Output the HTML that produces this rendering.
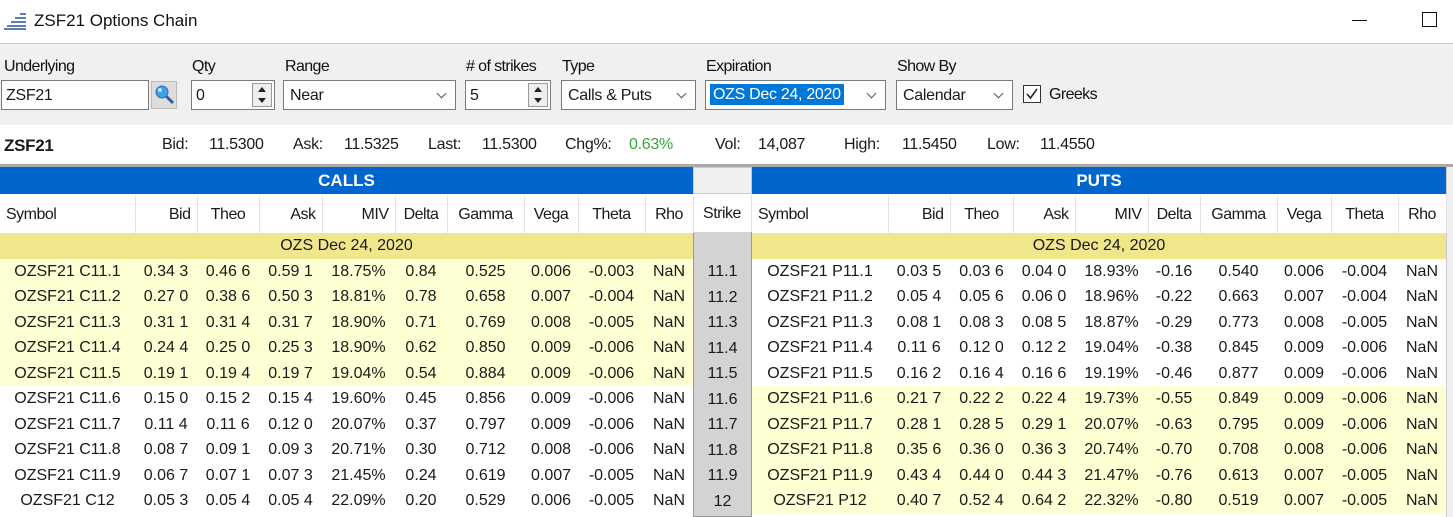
<!DOCTYPE html>
<html><head><meta charset="utf-8">
<style>
*{margin:0;padding:0;box-sizing:border-box}
body{width:1453px;height:517px;overflow:hidden;background:#fff;font-family:"Liberation Sans",sans-serif;font-size:16px;color:#1a1a1a;position:relative}
.a{position:absolute}
.lbl{position:absolute;top:58px;font-size:16px;letter-spacing:-0.6px;color:#111}
.box{position:absolute;top:80px;height:30px;background:#fff;border:1px solid #7a7a7a;font-size:16px;padding:6px 4px 4px;letter-spacing:-0.3px}
.dd::after{content:"";position:absolute;right:10px;top:9px;width:6px;height:6px;border-right:1px solid #555;border-bottom:1px solid #555;transform:rotate(45deg)}
.spin{position:absolute;right:2px;top:2px;width:20px;height:24px;border:1px solid #999;background:#eee}
.spin::before{content:"";position:absolute;left:5px;top:3px;border-left:4px solid transparent;border-right:4px solid transparent;border-bottom:5px solid #222}
.spin::after{content:"";position:absolute;left:5px;top:14px;border-left:4px solid transparent;border-right:4px solid transparent;border-top:5px solid #222}
.info{position:absolute;top:136px;font-size:16px;letter-spacing:-0.3px}
table{border-collapse:collapse;table-layout:fixed;position:absolute}
td{height:25.5px;padding:1px 4px 0;white-space:nowrap;font-size:16px;text-align:center;overflow:hidden}
th{height:37px;font-weight:normal;font-size:16px;letter-spacing:-0.5px;border-right:1px solid #e3e3e3;padding:1px 6px 0;text-align:right;white-space:nowrap}
th.l{text-align:left}
th.c{text-align:center}
tr.y td{background:#ffffd4}
tr.g td{background:#f0e68c;text-align:center}
</style></head><body>
<svg class="a" style="left:4px;top:12px" width="24" height="18" viewBox="0 0 24 18"><g fill="#5a7fb0"><rect x="16" y="1" width="6" height="2"/><rect x="11" y="5" width="11" height="2"/><rect x="7" y="9" width="15" height="2"/><rect x="3" y="13" width="19" height="2"/><rect x="0" y="16" width="22" height="2"/></g></svg>
<div class="a" style="left:34px;top:11px;font-size:17px;color:#111">ZSF21 Options Chain</div>
<div class="a" style="left:1352px;top:20px;width:15px;height:1px;background:#111"></div>
<div class="a" style="left:1422px;top:12px;width:15px;height:15px;border:1px solid #111"></div>
<div class="a" style="left:0;top:43px;width:1453px;height:82px;background:#f0f0f0;border-top:1px solid #ccc"></div>
<div class="lbl" style="left:4px">Underlying</div>
<div class="box" style="left:1px;width:148px">ZSF21</div>
<div class="a" style="left:151px;top:81px;width:26px;height:28px;background:#ddd;border:1px solid #bbb"></div>
<svg class="a" style="left:154px;top:84px" width="22" height="22" viewBox="0 0 22 22"><line x1="11" y1="11" x2="19" y2="19" stroke="#3a5c99" stroke-width="3"/><circle cx="8" cy="8" r="6" fill="#3fa0e8" stroke="#2a6fb5"/><circle cx="6" cy="6" r="2" fill="#bfe4ff"/></svg>
<div class="lbl" style="left:192px">Qty</div>
<div class="box" style="left:191px;width:84px">0<div class="spin"></div></div>
<div class="lbl" style="left:285px">Range</div>
<div class="box dd" style="left:283px;width:173px;padding-left:6px">Near</div>
<div class="lbl" style="left:466px">#&nbsp;of strikes</div>
<div class="box" style="left:465px;width:86px">5<div class="spin"></div></div>
<div class="lbl" style="left:562px">Type</div>
<div class="box dd" style="left:561px;width:135px;padding-left:6px">Calls &amp; Puts</div>
<div class="lbl" style="left:706px">Expiration</div>
<div class="box dd" style="left:705px;width:181px;padding:3px 4px"><span style="background:#0078d7;color:#fff;padding:2px 3px 1px;display:inline-block">OZS Dec 24, 2020</span></div>
<div class="lbl" style="left:897px">Show By</div>
<div class="box dd" style="left:896px;width:117px;padding-left:6px">Calendar</div>
<div class="a" style="left:1023px;top:85px;width:18px;height:18px;border:1px solid #333;background:#fff"></div>
<svg class="a" style="left:1025px;top:87px" width="14" height="14" viewBox="0 0 14 14"><path d="M2 7 L5.5 11 L12 2" fill="none" stroke="#222" stroke-width="1.6"/></svg>
<div class="lbl" style="left:1049px;top:86px">Greeks</div>
<div class="info" style="left:4px;font-weight:bold;font-size:17px">ZSF21</div>
<div class="info" style="left:162px">Bid:</div><div class="info" style="left:209px">11.5300</div>
<div class="info" style="left:293px">Ask:</div><div class="info" style="left:344px">11.5325</div>
<div class="info" style="left:428px">Last:</div><div class="info" style="left:482px">11.5300</div>
<div class="info" style="left:565px">Chg%:</div><div class="info" style="left:629px;color:#3aa43a">0.63%</div>
<div class="info" style="left:715px">Vol:</div><div class="info" style="left:758px">14,087</div>
<div class="info" style="left:844px">High:</div><div class="info" style="left:902px">11.5450</div>
<div class="info" style="left:987px">Low:</div><div class="info" style="left:1040px">11.4550</div>
<div class="a" style="left:0;top:164px;width:1453px;height:3px;background:#aaa"></div>
<div class="a" style="left:0;top:167px;width:693px;height:27px;background:#0066cc;color:#fff;font-weight:bold;text-align:center;line-height:27px;font-size:17px">CALLS</div>
<div class="a" style="left:693px;top:167px;width:59px;height:27px;background:#f0f0f0;border:1px solid #ccc"></div>
<div class="a" style="left:752px;top:167px;width:694px;height:27px;background:#0066cc;color:#fff;font-weight:bold;text-align:center;line-height:27px;font-size:17px">PUTS</div>
<div class="a" style="left:1446px;top:167px;width:7px;height:350px;background:#f0f0f0;border-left:1px solid #ccc"></div>
<div class="a" style="left:693px;top:195px;width:59px;height:38px;line-height:38px;text-align:center;letter-spacing:-0.5px;border-right:1px solid #e3e3e3">Strike</div>
<div class="a" style="left:693px;top:232px;width:59px;height:285px;background:#d3d3d3;border-left:1px solid #999;border-right:1px solid #999;border-bottom:1px solid #999"></div>
<div class="a" style="left:693px;top:259px;width:59px;text-align:center;line-height:25.5px;font-size:16px">
<div>11.1</div><div>11.2</div><div>11.3</div><div>11.4</div><div>11.5</div><div>11.6</div><div>11.7</div><div>11.8</div><div>11.9</div><div>12</div></div>

<table style="left:0;top:196px;width:693px">
<colgroup><col style="width:135px"><col style="width:62px"><col style="width:62px"><col style="width:63px"><col style="width:73px"><col style="width:52px"><col style="width:77px"><col style="width:54px"><col style="width:67px"><col style="width:48px"></colgroup>
<tr><th class="l">Symbol</th><th>Bid</th><th class="c">Theo</th><th>Ask</th><th>MIV</th><th class="c">Delta</th><th class="c">Gamma</th><th class="c">Vega</th><th class="c">Theta</th><th class="c">Rho</th></tr>
<tr class="g"><td colspan="10">OZS Dec 24, 2020</td></tr>
<tr class="y"><td>OZSF21 C11.1</td><td>0.34 3</td><td>0.46 6</td><td>0.59 1</td><td>18.75%</td><td>0.84</td><td>0.525</td><td>0.006</td><td>-0.003</td><td>NaN</td></tr>
<tr class="y"><td>OZSF21 C11.2</td><td>0.27 0</td><td>0.38 6</td><td>0.50 3</td><td>18.81%</td><td>0.78</td><td>0.658</td><td>0.007</td><td>-0.004</td><td>NaN</td></tr>
<tr class="y"><td>OZSF21 C11.3</td><td>0.31 1</td><td>0.31 4</td><td>0.31 7</td><td>18.90%</td><td>0.71</td><td>0.769</td><td>0.008</td><td>-0.005</td><td>NaN</td></tr>
<tr class="y"><td>OZSF21 C11.4</td><td>0.24 4</td><td>0.25 0</td><td>0.25 3</td><td>18.90%</td><td>0.62</td><td>0.850</td><td>0.009</td><td>-0.006</td><td>NaN</td></tr>
<tr class="y"><td>OZSF21 C11.5</td><td>0.19 1</td><td>0.19 4</td><td>0.19 7</td><td>19.04%</td><td>0.54</td><td>0.884</td><td>0.009</td><td>-0.006</td><td>NaN</td></tr>
<tr><td>OZSF21 C11.6</td><td>0.15 0</td><td>0.15 2</td><td>0.15 4</td><td>19.60%</td><td>0.45</td><td>0.856</td><td>0.009</td><td>-0.006</td><td>NaN</td></tr>
<tr><td>OZSF21 C11.7</td><td>0.11 4</td><td>0.11 6</td><td>0.12 0</td><td>20.07%</td><td>0.37</td><td>0.797</td><td>0.009</td><td>-0.006</td><td>NaN</td></tr>
<tr><td>OZSF21 C11.8</td><td>0.08 7</td><td>0.09 1</td><td>0.09 3</td><td>20.71%</td><td>0.30</td><td>0.712</td><td>0.008</td><td>-0.006</td><td>NaN</td></tr>
<tr><td>OZSF21 C11.9</td><td>0.06 7</td><td>0.07 1</td><td>0.07 3</td><td>21.45%</td><td>0.24</td><td>0.619</td><td>0.007</td><td>-0.005</td><td>NaN</td></tr>
<tr><td>OZSF21 C12</td><td>0.05 3</td><td>0.05 4</td><td>0.05 4</td><td>22.09%</td><td>0.20</td><td>0.529</td><td>0.006</td><td>-0.005</td><td>NaN</td></tr>
</table>

<table style="left:752px;top:196px;width:694px">
<colgroup><col style="width:136px"><col style="width:62px"><col style="width:63px"><col style="width:62px"><col style="width:73px"><col style="width:52px"><col style="width:77px"><col style="width:54px"><col style="width:67px"><col style="width:48px"></colgroup>
<tr><th class="l">Symbol</th><th>Bid</th><th class="c">Theo</th><th>Ask</th><th>MIV</th><th class="c">Delta</th><th class="c">Gamma</th><th class="c">Vega</th><th class="c">Theta</th><th class="c">Rho</th></tr>
<tr class="g"><td colspan="10">OZS Dec 24, 2020</td></tr>
<tr><td>OZSF21 P11.1</td><td>0.03 5</td><td>0.03 6</td><td>0.04 0</td><td>18.93%</td><td>-0.16</td><td>0.540</td><td>0.006</td><td>-0.004</td><td>NaN</td></tr>
<tr><td>OZSF21 P11.2</td><td>0.05 4</td><td>0.05 6</td><td>0.06 0</td><td>18.96%</td><td>-0.22</td><td>0.663</td><td>0.007</td><td>-0.004</td><td>NaN</td></tr>
<tr><td>OZSF21 P11.3</td><td>0.08 1</td><td>0.08 3</td><td>0.08 5</td><td>18.87%</td><td>-0.29</td><td>0.773</td><td>0.008</td><td>-0.005</td><td>NaN</td></tr>
<tr><td>OZSF21 P11.4</td><td>0.11 6</td><td>0.12 0</td><td>0.12 2</td><td>19.04%</td><td>-0.38</td><td>0.845</td><td>0.009</td><td>-0.006</td><td>NaN</td></tr>
<tr><td>OZSF21 P11.5</td><td>0.16 2</td><td>0.16 4</td><td>0.16 6</td><td>19.19%</td><td>-0.46</td><td>0.877</td><td>0.009</td><td>-0.006</td><td>NaN</td></tr>
<tr class="y"><td>OZSF21 P11.6</td><td>0.21 7</td><td>0.22 2</td><td>0.22 4</td><td>19.73%</td><td>-0.55</td><td>0.849</td><td>0.009</td><td>-0.006</td><td>NaN</td></tr>
<tr class="y"><td>OZSF21 P11.7</td><td>0.28 1</td><td>0.28 5</td><td>0.29 1</td><td>20.07%</td><td>-0.63</td><td>0.795</td><td>0.009</td><td>-0.006</td><td>NaN</td></tr>
<tr class="y"><td>OZSF21 P11.8</td><td>0.35 6</td><td>0.36 0</td><td>0.36 3</td><td>20.74%</td><td>-0.70</td><td>0.708</td><td>0.008</td><td>-0.006</td><td>NaN</td></tr>
<tr class="y"><td>OZSF21 P11.9</td><td>0.43 4</td><td>0.44 0</td><td>0.44 3</td><td>21.47%</td><td>-0.76</td><td>0.613</td><td>0.007</td><td>-0.005</td><td>NaN</td></tr>
<tr class="y"><td>OZSF21 P12</td><td>0.40 7</td><td>0.52 4</td><td>0.64 2</td><td>22.32%</td><td>-0.80</td><td>0.519</td><td>0.007</td><td>-0.005</td><td>NaN</td></tr>
</table>
</body></html>
